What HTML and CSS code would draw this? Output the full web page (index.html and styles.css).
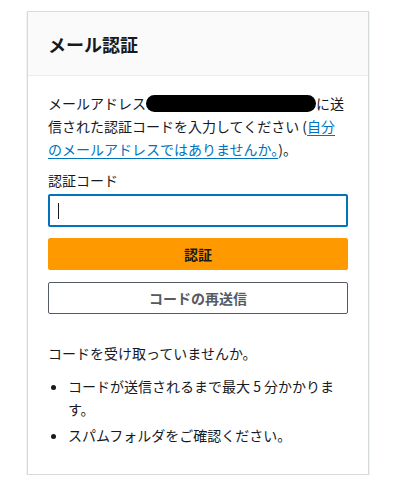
FILE: index.html
```html
<!DOCTYPE html>
<html lang="ja">
<head>
<meta charset="utf-8">
<link rel="stylesheet" href="styles.css">
</head>
<body>
<div class="card">
  <div class="card-header"><h1 class="title">メール認証</h1></div>
  <div class="card-body">
    <p class="intro">メールアドレス<span class="redact"></span>に送信された認証コードを入力してください (<a class="link" href="#">自分のメールアドレスではありませんか。</a>)。</p>
    <label class="label">認証コード</label>
    <div class="input"><span class="caret"></span></div>
    <button class="btn btn-primary">認証</button>
    <button class="btn btn-secondary">コードの再送信</button>
    <p class="help">コードを受け取っていませんか。</p>
    <ul class="list">
      <li>コードが送信されるまで最大 5 分かかります。</li>
      <li>スパムフォルダをご確認ください。</li>
    </ul>
  </div>
</div>
</body>
</html>
```

FILE: styles.css
```css
* { box-sizing: border-box; }
html, body { margin: 0; padding: 0; background: #ffffff; }
body {
  font-family: "Noto Sans CJK JP", "Noto Sans", sans-serif;
  color: #16191f;
  font-size: 14px;
  line-height: 23px;
  padding: 11px 0 0 27px;
}
.card {
  width: 342px;
  background: #fff;
  border: 1px solid #d5dbdb;
  box-shadow: 0 1px 1px rgba(0,28,36,0.3);
}
.card-header {
  height: 64px;
  background: #fafafa;
  border-bottom: 1px solid #eaeded;
  display: flex;
  align-items: center;
  padding: 0 20px;
}
.title {
  margin: 0;
  font-size: 18px;
  font-weight: 700;
  line-height: 24px;
}
.card-body {
  padding: 16px 20px 27px;
  display: flex;
  flex-direction: column;
}
.intro { margin: 0; }
.redact {
  display: inline-block;
  width: 170px;
  height: 17px;
  background: #000;
  border-radius: 9px;
  vertical-align: -3px;
}
.link { color: #0073bb; text-decoration: underline; text-underline-offset: 3px; }
.label { margin-top: 8px; display: block; }
.input {
  margin-top: 2px;
  height: 33px;
  border: 2px solid #0073bb;
  border-radius: 2px;
  display: flex;
  align-items: center;
  padding-left: 8px;
}
.caret { width: 1px; height: 16px; background: #16191f; }
.btn {
  font-family: inherit;
  font-size: 14px;
  font-weight: 700;
  height: 32px;
  border-radius: 2px;
  padding: 0;
  width: 100%;
}
.btn-primary {
  margin-top: 11px;
  background: #ff9900;
  border: 1px solid #ff9900;
  color: #16191f;
}
.btn-secondary {
  margin-top: 12px;
  background: #fff;
  border: 1px solid #545b64;
  color: #545b64;
}
.help { margin: 28px 0 0; }
.list { margin: 10px 0 0; padding-left: 20px; }
.list li { padding-left: 0; }
.list li + li { margin-top: 3px; }
```
